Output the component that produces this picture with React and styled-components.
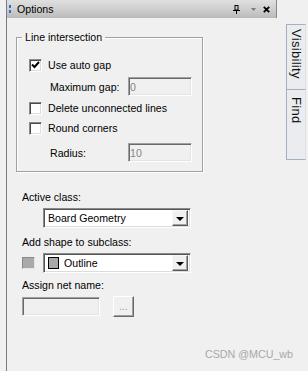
import React from "react";
import styled, { createGlobalStyle } from "styled-components";

const GlobalStyle = createGlobalStyle`
  * { box-sizing: border-box; }
  body {
    margin: 0;
    background: #f0f0f0;
    font-family: "Liberation Sans", Arial, sans-serif;
    font-size: 10.6px;
    color: #000;
  }
`;

const Window = styled.div`
  position: relative;
  display: flex;
  width: 308px;
  height: 371px;
  overflow: hidden;
  background: #f0f0f0;
`;

const Dock = styled.div`
  margin-left: 6px;
  width: 280px;
  border-left: 1px solid #7c7c7c;
  display: flex;
  flex-direction: column;
`;

const TitleBar = styled.div`
  width: 270px;
  height: 18px;
  display: flex;
  align-items: center;
  padding: 0 6px 0 2px;
  border-right: 1px solid #8a8a8a;
  background: linear-gradient(#e0e0e0, #cdcdcd 55%, #bababa);
`;

const Grip = styled.div`
  display: flex;
  flex-direction: column;
  gap: 2px;
  width: 2px;

  span {
    display: block;
    width: 2px;
    height: 3px;
    background: #2f6fd6;
  }
`;

const Title = styled.span`
  margin-left: 6px;
  flex: 1;
  line-height: 13px;
`;

const TitleIcon = styled.svg`
  display: block;
  margin-left: ${(p) => p.$ml || 0}px;
`;

const Body = styled.div`
  padding-left: 9px;
  display: flex;
  flex-direction: column;
`;

const GroupBox = styled.fieldset`
  margin: 13px 0 0 0;
  width: 187px;
  padding: 0 0 9px 5px;
  border: 1px solid #a0a0a0;
  box-shadow: 1px 1px 0 #fff, inset 1px 1px 0 #fff;
  min-inline-size: 0;
`;

const Legend = styled.legend`
  padding: 0 3px;
  line-height: 13px;
`;

const CheckRow = styled.div`
  height: 20px;
  margin-top: ${(p) => p.$mt || 0}px;
  padding-left: 7px;
  display: flex;
  align-items: center;
  gap: 6px;
`;

const Box = styled.div`
  width: 13px;
  height: 13px;
  background: #fff;
  border: 1px solid;
  border-color: #8a8a8a #fff #fff #8a8a8a;
  box-shadow: inset 1px 1px 0 #4a4a4a, inset -1px -1px 0 #dcdcdc;
  display: flex;
  align-items: center;
  justify-content: center;
`;

const FieldRow = styled.div`
  height: 19px;
  margin-top: ${(p) => p.$mt || 0}px;
  padding-left: 28px;
  display: flex;
  align-items: center;
`;

const FieldLabel = styled.span`
  width: 78px;
`;

const Input = styled.div`
  width: ${(p) => p.$w}px;
  height: 19px;
  padding-left: 1px;
  display: flex;
  align-items: center;
  color: #858585;
  background: #f0f0f0;
  border: 1px solid;
  border-color: #a0a0a0 #fff #fff #a0a0a0;
  box-shadow: inset 1px 1px 0 #696969, inset -1px -1px 0 #e3e3e3;
`;

const Section = styled.div`
  margin-left: 6px;
  display: flex;
  flex-direction: column;
`;

const Caption = styled.div`
  height: 14px;
  line-height: 14px;
  margin-top: ${(p) => p.$mt || 0}px;
`;

const Row = styled.div`
  margin-top: ${(p) => p.$mt || 0}px;
  display: flex;
  align-items: center;
`;

const Combo = styled.div`
  width: 148px;
  height: 20px;
  margin-left: ${(p) => p.$ml || 0}px;
  display: flex;
  align-items: center;
  background: #fff;
  border: 1px solid;
  border-color: #8a8a8a #fff #fff #8a8a8a;
  box-shadow: inset 1px 1px 0 #555, inset -1px -1px 0 #dcdcdc;
  padding: 2px 2px 2px 4px;
`;

const ComboText = styled.span`
  flex: 1;
  display: flex;
  align-items: center;
  gap: 5px;
`;

const DropButton = styled.div`
  width: 16px;
  height: 16px;
  display: flex;
  align-items: center;
  justify-content: center;
  background: #f0f0f0;
  border: 1px solid;
  border-color: #f8f8f8 #5a5a5a #5a5a5a #f8f8f8;
  box-shadow: inset -1px -1px 0 #a0a0a0;

  &::after {
    content: "";
    border-left: 4px solid transparent;
    border-right: 4px solid transparent;
    border-top: 4px solid #000;
    margin-top: 1px;
  }
`;

const Swatch = styled.div`
  width: ${(p) => p.$size}px;
  height: 12px;
  background: #a9a9a9;
  border: 1px solid;
  border-color: ${(p) => (p.$flat ? "#000" : "#8a8a8a #e6e6e6 #e6e6e6 #8a8a8a")};
`;

const DotsButton = styled.div`
  width: 21px;
  height: 21px;
  margin-left: 13px;
  display: flex;
  align-items: center;
  justify-content: center;
  color: #9a9a9a;
  font-size: 10px;
  background: #f0f0f0;
  border: 1px solid;
  border-color: #fff #696969 #696969 #fff;
  box-shadow: inset -1px -1px 0 #a0a0a0;
`;

const TabStrip = styled.div`
  width: 20px;
  padding-top: 24px;
  display: flex;
  flex-direction: column;
`;

const Tab = styled.div`
  height: ${(p) => p.$h}px;
  padding-top: ${(p) => p.$pt}px;
  margin-top: ${(p) => (p.$first ? 0 : -1)}px;
  background: #eaecef;
  border: 1px solid #a3b0bf;
  border-right-color: #dde2e8;
  writing-mode: vertical-rl;
  display: flex;
  align-items: center;
  font-size: 13px;
  letter-spacing: 0.3px;
  line-height: 16px;
  color: #111;
`;

const Watermark = styled.div`
  position: absolute;
  right: 15px;
  bottom: 10px;
  font-size: 10.7px;
  line-height: 13px;
  color: #a8a8a8;
`;

const Check = () => (
  <svg width="9" height="8" viewBox="0 0 9 8">
    <polyline points="1,3.5 3.5,6 8,1" fill="none" stroke="#000" strokeWidth="2" />
  </svg>
);

const CheckBox = ({ checked }) => <Box>{checked && <Check />}</Box>;

const App = () => {
  return (
    <Window>
      <GlobalStyle />
      <Dock>
        <TitleBar>
          <Grip>
            <span />
            <span />
          </Grip>
          <Title>Options</Title>
          <TitleIcon width="7" height="9" viewBox="0 0 7 9">
            <rect x="2" y="0.5" width="3" height="4.5" fill="none" stroke="#000" />
            <line x1="0" y1="5.5" x2="7" y2="5.5" stroke="#000" />
            <line x1="3.5" y1="5.5" x2="3.5" y2="9" stroke="#000" />
          </TitleIcon>
          <TitleIcon $ml={11} width="5" height="3" viewBox="0 0 5 3">
            <polygon points="0,0 5,0 2.5,3" fill="#7a7a7a" />
          </TitleIcon>
          <TitleIcon $ml={7} width="7" height="7" viewBox="0 0 7 7">
            <path d="M0.8 0.8 L6.2 6.2 M6.2 0.8 L0.8 6.2" stroke="#000" strokeWidth="1.8" />
          </TitleIcon>
        </TitleBar>

        <Body>
          <GroupBox>
            <Legend>Line intersection</Legend>
            <CheckRow $mt={11}>
              <CheckBox checked />
              <span>Use auto gap</span>
            </CheckRow>
            <FieldRow $mt={2}>
              <FieldLabel>Maximum gap:</FieldLabel>
              <Input $w={64}>0</Input>
            </FieldRow>
            <CheckRow $mt={2}>
              <CheckBox />
              <span>Delete unconnected lines</span>
            </CheckRow>
            <CheckRow>
              <CheckBox />
              <span>Round corners</span>
            </CheckRow>
            <FieldRow $mt={5}>
              <FieldLabel>Radius:</FieldLabel>
              <Input $w={64}>10</Input>
            </FieldRow>
          </GroupBox>

          <Section>
            <Caption $mt={18}>Active class:</Caption>
            <Row $mt={4}>
              <Combo $ml={21}>
                <ComboText>Board Geometry</ComboText>
                <DropButton />
              </Combo>
            </Row>
            <Caption $mt={7}>Add shape to subclass:</Caption>
            <Row $mt={4}>
              <Swatch $size={13} />
              <Combo $ml={8}>
                <ComboText>
                  <Swatch $size={11} $flat />
                  Outline
                </ComboText>
                <DropButton />
              </Combo>
            </Row>
            <Caption $mt={5}>Assign net name:</Caption>
            <Row $mt={4}>
              <Input $w={78} />
              <DotsButton>...</DotsButton>
            </Row>
          </Section>
        </Body>
      </Dock>

      <TabStrip>
        <Tab $first $h={66} $pt={4}>Visibility</Tab>
        <Tab $h={71} $pt={7}>Find</Tab>
      </TabStrip>

      <Watermark>CSDN @MCU_wb</Watermark>
    </Window>
  );
};

export default App;
